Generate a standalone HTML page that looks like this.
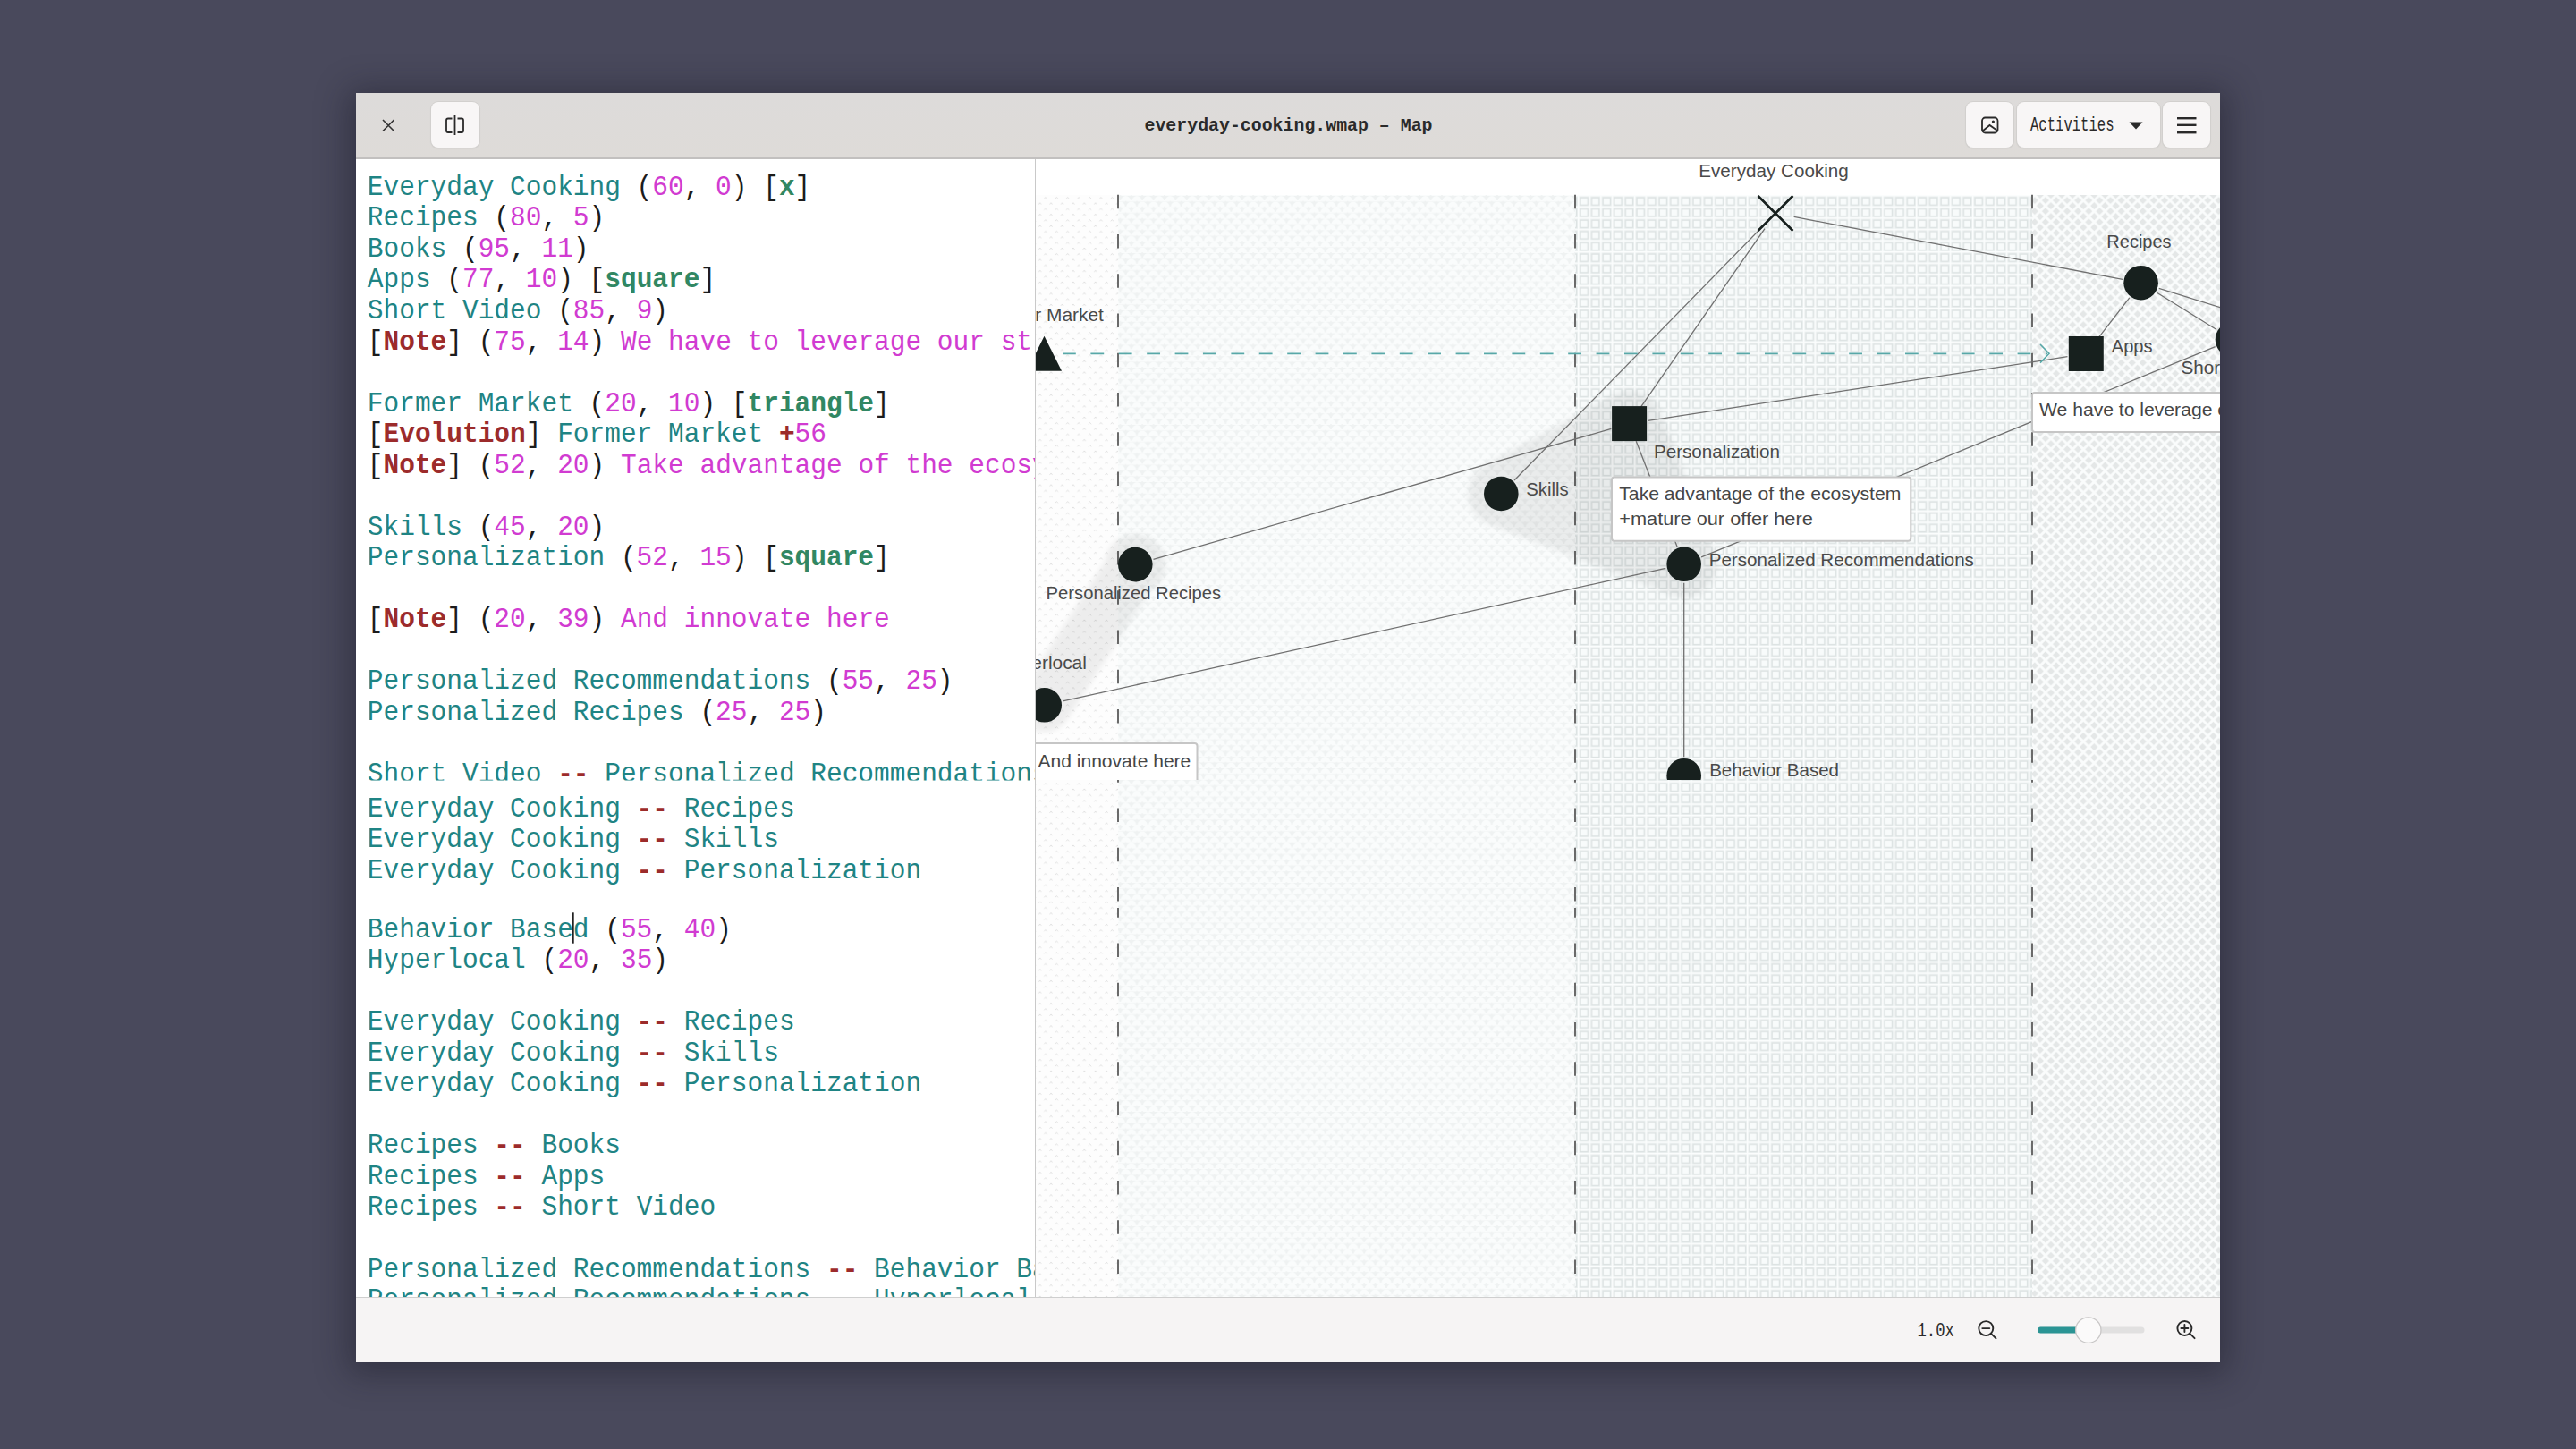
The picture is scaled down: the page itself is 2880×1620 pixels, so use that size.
<!DOCTYPE html>
<html><head><meta charset="utf-8">
<style>
html,body{margin:0;padding:0;}
body{width:2880px;height:1620px;overflow:hidden;position:relative;background:#49495c;font-family:"Liberation Sans",sans-serif;}
.abs{position:absolute;}
#shadow{position:absolute;left:398px;top:104px;width:2084px;height:1419px;box-shadow:0 5px 34px 8px rgba(22,22,34,0.42);}
#hdr{position:absolute;left:398px;top:104px;width:2084px;height:72px;background:linear-gradient(#dddbda,#dedbd8);}
#hdrline{position:absolute;left:398px;top:176px;width:2084px;height:2px;background:#c2c0bf;}
.btn{position:absolute;top:114px;height:51px;background:#f8f6f6;border-radius:8px;box-shadow:0 0 0 1px #d2d0ce, 0 1px 2px rgba(0,0,0,0.10);}
.code text{font-family:"Liberation Mono",monospace;font-size:29.5px;fill:#1c1c1c;stroke:#1c1c1c;stroke-width:0;}
.code .n{fill:#1f8484;stroke:#1f8484}.code .m{fill:#d13bd1;stroke:#d13bd1}.code .k{fill:#9c2b2b;font-weight:bold;stroke-width:0}.code .g{fill:#318763;font-weight:bold;stroke-width:0}
#divider{position:absolute;left:1157px;top:178px;width:1px;height:1272px;background:#c9c9c9;}
#bot{position:absolute;left:398px;top:1451px;width:2084px;height:72px;background:#f6f4f4;}
#botline{position:absolute;left:398px;top:1450px;width:2084px;height:1px;background:#cfcfcf;}
</style></head><body>
<div id="shadow"></div>
<div id="hdr"></div>
<div id="hdrline"></div>
<div class="btn" style="left:482px;width:54px;"></div>
<div class="btn" style="left:2198px;width:53px;"></div>
<div class="btn" style="left:2255px;width:160px;"></div>
<div class="btn" style="left:2418px;width:53px;"></div>
<svg class="abs" style="left:0;top:0" width="2880" height="180" viewBox="0 0 2880 180">
  <path d="M428 134 L440.5 146.5 M440.5 134 L428 146.5" stroke="#333" stroke-width="1.6" fill="none"/>
  <g stroke="#2a2a2a" stroke-width="1.8" fill="none">
    <path d="M505.5 132.5 H501 Q499 132.5 499 134.5 V146 Q499 148 501 148 H505.5"/>
    <path d="M511.5 132.5 H516 Q518 132.5 518 134.5 V146 Q518 148 516 148 H511.5"/>
    <path d="M508.5 129 V151"/>
    <rect x="2216" y="131.5" width="17.5" height="17" rx="3.5"/>
    <path d="M2216.5 146.5 L2224.5 140 L2233 146"/>
  </g>
  <circle cx="2228.4" cy="136" r="1.6" fill="#2a2a2a"/>
  <path d="M2380.5 136.5 H2395.5 L2388 144.5 Z" fill="#2a2a2a"/>
  <g fill="#2a2a2a"><rect x="2434" y="131" width="21.5" height="2.4"/><rect x="2434" y="138.6" width="21.5" height="2.4"/><rect x="2434" y="147" width="21.5" height="2.4"/></g>
  <text x="1279.5" y="146.3" font-family="Liberation Mono" font-weight="bold" font-size="20" fill="#2a2a2a" textLength="322" lengthAdjust="spacingAndGlyphs">everyday-cooking.wmap – Map</text>
  <text x="2270" y="146.3" font-family="Liberation Mono" font-size="21.5" fill="#2a2a2a" textLength="93.5" lengthAdjust="spacingAndGlyphs">Activities</text>
</svg>
<svg class="abs" style="left:398px;top:178px" width="759" height="1272" viewBox="398 178 759 1272">
<defs><clipPath id="ct"><rect x="398" y="178" width="759" height="694.5"/></clipPath>
<clipPath id="ca"><rect x="398" y="872.5" width="759" height="142.5"/></clipPath>
<clipPath id="cb"><rect x="398" y="1015" width="759" height="435.5"/></clipPath></defs>
<rect x="398" y="178" width="759" height="1272" fill="#fff"/>
<g class="code">
<g clip-path="url(#ct)"><text transform="translate(410.8 217.85) scale(1 1.08)" xml:space="preserve"><tspan class="n">Everyday Cooking</tspan> (<tspan class="m">60</tspan>, <tspan class="m">0</tspan>) [<tspan class="g">x</tspan>]</text>
<text transform="translate(410.8 252.38) scale(1 1.08)" xml:space="preserve"><tspan class="n">Recipes</tspan> (<tspan class="m">80</tspan>, <tspan class="m">5</tspan>)</text>
<text transform="translate(410.8 286.91) scale(1 1.08)" xml:space="preserve"><tspan class="n">Books</tspan> (<tspan class="m">95</tspan>, <tspan class="m">11</tspan>)</text>
<text transform="translate(410.8 321.44) scale(1 1.08)" xml:space="preserve"><tspan class="n">Apps</tspan> (<tspan class="m">77</tspan>, <tspan class="m">10</tspan>) [<tspan class="g">square</tspan>]</text>
<text transform="translate(410.8 355.97) scale(1 1.08)" xml:space="preserve"><tspan class="n">Short Video</tspan> (<tspan class="m">85</tspan>, <tspan class="m">9</tspan>)</text>
<text transform="translate(410.8 390.50) scale(1 1.08)" xml:space="preserve">[<tspan class="k">Note</tspan>] (<tspan class="m">75</tspan>, <tspan class="m">14</tspan>) <tspan class="m">We have to leverage our strengths</tspan></text>
<text transform="translate(410.8 459.56) scale(1 1.08)" xml:space="preserve"><tspan class="n">Former Market</tspan> (<tspan class="m">20</tspan>, <tspan class="m">10</tspan>) [<tspan class="g">triangle</tspan>]</text>
<text transform="translate(410.8 494.09) scale(1 1.08)" xml:space="preserve">[<tspan class="k">Evolution</tspan>] <tspan class="n">Former Market</tspan> <tspan class="k">+</tspan><tspan class="m">56</tspan></text>
<text transform="translate(410.8 528.62) scale(1 1.08)" xml:space="preserve">[<tspan class="k">Note</tspan>] (<tspan class="m">52</tspan>, <tspan class="m">20</tspan>) <tspan class="m">Take advantage of the ecosystem +mature our offer here</tspan></text>
<text transform="translate(410.8 597.68) scale(1 1.08)" xml:space="preserve"><tspan class="n">Skills</tspan> (<tspan class="m">45</tspan>, <tspan class="m">20</tspan>)</text>
<text transform="translate(410.8 632.21) scale(1 1.08)" xml:space="preserve"><tspan class="n">Personalization</tspan> (<tspan class="m">52</tspan>, <tspan class="m">15</tspan>) [<tspan class="g">square</tspan>]</text>
<text transform="translate(410.8 701.27) scale(1 1.08)" xml:space="preserve">[<tspan class="k">Note</tspan>] (<tspan class="m">20</tspan>, <tspan class="m">39</tspan>) <tspan class="m">And innovate here</tspan></text>
<text transform="translate(410.8 770.33) scale(1 1.08)" xml:space="preserve"><tspan class="n">Personalized Recommendations</tspan> (<tspan class="m">55</tspan>, <tspan class="m">25</tspan>)</text>
<text transform="translate(410.8 804.86) scale(1 1.08)" xml:space="preserve"><tspan class="n">Personalized Recipes</tspan> (<tspan class="m">25</tspan>, <tspan class="m">25</tspan>)</text>
<text transform="translate(410.8 873.92) scale(1 1.08)" xml:space="preserve"><tspan class="n">Short Video</tspan> <tspan class="k">--</tspan> <tspan class="n">Personalized Recommendations</tspan></text>
</g>
<g clip-path="url(#ca)"><text transform="translate(410.8 912.70) scale(1 1.08)" xml:space="preserve"><tspan class="n">Everyday Cooking</tspan> <tspan class="k">--</tspan> <tspan class="n">Recipes</tspan></text>
<text transform="translate(410.8 947.23) scale(1 1.08)" xml:space="preserve"><tspan class="n">Everyday Cooking</tspan> <tspan class="k">--</tspan> <tspan class="n">Skills</tspan></text>
<text transform="translate(410.8 981.76) scale(1 1.08)" xml:space="preserve"><tspan class="n">Everyday Cooking</tspan> <tspan class="k">--</tspan> <tspan class="n">Personalization</tspan></text>
</g>
<g clip-path="url(#cb)"><text transform="translate(410.8 1047.70) scale(1 1.08)" xml:space="preserve"><tspan class="n">Behavior Based</tspan> (<tspan class="m">55</tspan>, <tspan class="m">40</tspan>)</text>
<text transform="translate(410.8 1082.23) scale(1 1.08)" xml:space="preserve"><tspan class="n">Hyperlocal</tspan> (<tspan class="m">20</tspan>, <tspan class="m">35</tspan>)</text>
<text transform="translate(410.8 1151.29) scale(1 1.08)" xml:space="preserve"><tspan class="n">Everyday Cooking</tspan> <tspan class="k">--</tspan> <tspan class="n">Recipes</tspan></text>
<text transform="translate(410.8 1185.82) scale(1 1.08)" xml:space="preserve"><tspan class="n">Everyday Cooking</tspan> <tspan class="k">--</tspan> <tspan class="n">Skills</tspan></text>
<text transform="translate(410.8 1220.35) scale(1 1.08)" xml:space="preserve"><tspan class="n">Everyday Cooking</tspan> <tspan class="k">--</tspan> <tspan class="n">Personalization</tspan></text>
<text transform="translate(410.8 1289.41) scale(1 1.08)" xml:space="preserve"><tspan class="n">Recipes</tspan> <tspan class="k">--</tspan> <tspan class="n">Books</tspan></text>
<text transform="translate(410.8 1323.94) scale(1 1.08)" xml:space="preserve"><tspan class="n">Recipes</tspan> <tspan class="k">--</tspan> <tspan class="n">Apps</tspan></text>
<text transform="translate(410.8 1358.47) scale(1 1.08)" xml:space="preserve"><tspan class="n">Recipes</tspan> <tspan class="k">--</tspan> <tspan class="n">Short Video</tspan></text>
<text transform="translate(410.8 1427.53) scale(1 1.08)" xml:space="preserve"><tspan class="n">Personalized Recommendations</tspan> <tspan class="k">--</tspan> <tspan class="n">Behavior Based</tspan></text>
<text transform="translate(410.8 1462.06) scale(1 1.08)" xml:space="preserve"><tspan class="n">Personalized Recommendations</tspan> <tspan class="k">--</tspan> <tspan class="n">Hyperlocal</tspan></text>
</g>
<rect x="640.0" y="1020.3" width="1.7" height="34.4" fill="#222"/>
</g></svg>
<svg class="abs" style="left:1158px;top:178px" width="1324" height="1272" viewBox="1158 178 1324 1272">
<defs>
<pattern id="p1" patternUnits="userSpaceOnUse" width="12.4" height="12.6" x="0" y="218">
<rect width="12.4" height="12.6" fill="#fdfdfd"/>
<path d="M1.8 4.2 L3.3 2.4 L4.8 4.2 M8 10.5 L9.5 8.7 L11 10.5" stroke="#dcdcdc" stroke-width="0.9" fill="none"/>
</pattern>
<pattern id="p2" patternUnits="userSpaceOnUse" width="12.4" height="12.8" x="0" y="218">
<rect width="12.4" height="12.8" fill="#eff2f2"/>
<path d="M0.7 6.6 A5.5 5.6 0 0 1 11.7 6.6 Z M-5.5 13 A5.5 5.6 0 0 1 5.5 13 Z M6.9 13 A5.5 5.6 0 0 1 17.9 13 Z" fill="#fafcfc"/>
<path d="M0.7 0.2 L11.7 0.2 M-5.5 6.6 L5.5 6.6 M6.9 6.6 L17.9 6.6" stroke="#fafcfc" stroke-width="1.4"/>
</pattern>
<pattern id="p3" patternUnits="userSpaceOnUse" width="12.6" height="12.6" x="0" y="218">
<rect width="12.6" height="12.6" fill="#edf2f2"/>
<rect x="0" y="0" width="12.6" height="1.4" fill="#fbfdfd"/>
<rect x="0" y="0" width="1.4" height="12.6" fill="#fbfdfd"/>
<rect x="3" y="3" width="8.2" height="8.2" fill="#f8fbfb" stroke="#dce2e2" stroke-width="1.3"/>
</pattern>
<pattern id="p4" patternUnits="userSpaceOnUse" width="12.1" height="12.1" x="0" y="218">
<rect width="12.1" height="12.1" fill="#e4e7e7"/>
<path d="M-1 -1 L13.1 13.1 M13.1 -1 L-1 13.1" stroke="#fafcfc" stroke-width="2.8"/>
</pattern>
<filter id="blur" x="-50%" y="-50%" width="200%" height="200%"><feGaussianBlur stdDeviation="3"/></filter>
<clipPath id="cTop"><rect x="1158" y="178" width="1324" height="694"/></clipPath>
<clipPath id="cA"><rect x="1158" y="872" width="1324" height="143"/></clipPath>
<clipPath id="cB"><rect x="1158" y="1015" width="1324" height="435"/></clipPath>
</defs>
<rect x="1158" y="178" width="1324" height="1272" fill="#ffffff"/>
<g clip-path="url(#cTop)">
<rect x="1158" y="218" width="92" height="654" fill="url(#p1)"/><rect x="1250" y="218" width="511" height="654" fill="url(#p2)"/><rect x="1761" y="218" width="511" height="654" fill="url(#p3)"/><rect x="2272" y="218" width="210" height="654" fill="url(#p4)"/>
<g clip-path="url(#cTop)" stroke="#6a6a6a" stroke-width="2"><path d="M1250 217.8 V872" stroke-dasharray="15.5 28.75"/><path d="M1761 217.8 V872" stroke-dasharray="15.5 28.75"/><path d="M2272 217.8 V872" stroke-dasharray="15.5 28.75"/></g>
<g filter="url(#blur)" opacity="0.06" fill="#000" stroke="#000" stroke-linecap="round" stroke-linejoin="round">
<path d="M1167.7 788.3 L1269.3 631.1" stroke-width="60" fill="none"/>
<circle cx="1269.3" cy="631.1" r="34" stroke="none"/>
<path d="M1678.3 552 L1821.6 473.6 L1882.7 630.8 Z" stroke-width="74"/>
</g>
<g stroke="#707070" stroke-width="1.3">
<line x1="2005.6" y1="242.4" x2="2373.0" y2="312.3"/>
<line x1="1970.3" y1="253.5" x2="1693.0" y2="537.0"/>
<line x1="1973.0" y1="255.7" x2="1833.6" y2="456.4"/>
<line x1="2413.7" y1="322.4" x2="2679.9" y2="405.2"/>
<line x1="2380.8" y1="332.8" x2="2345.1" y2="378.9"/>
<line x1="2411.5" y1="327.3" x2="2478.1" y2="368.5"/>
<line x1="1882.7" y1="651.8" x2="1882.7" y2="846.2"/>
<line x1="1862.2" y1="635.3" x2="1188.2" y2="783.8"/>
<line x1="2476.6" y1="387.6" x2="1902.1" y2="622.8"/>
<line x1="1842.4" y1="470.4" x2="2311.5" y2="398.7"/>
<line x1="1289.5" y1="625.3" x2="1801.4" y2="479.4"/>
<line x1="1829.2" y1="493.2" x2="1875.1" y2="611.2"/>
</g>
<path d="M1186 395.3 H2289" stroke="#58a8a8" stroke-width="1.7" stroke-dasharray="14.8 16.6" stroke-dashoffset="-2"/>
<path d="M2281 385 L2291 395.3 L2281 405.6" stroke="#58a8a8" stroke-width="1.6" fill="none"/>
<g fill="#17201e">
<circle cx="2393.6" cy="316.2" r="19.3"/>
<circle cx="2496" cy="379.6" r="19.3"/>
<circle cx="1678.3" cy="552" r="19.3"/>
<circle cx="1882.7" cy="630.8" r="19.3"/>
<circle cx="1269.3" cy="631.1" r="19.3"/>
<circle cx="1167.7" cy="788.3" r="19.3"/>
<circle cx="1882.7" cy="867.2" r="19.3"/>
<rect x="2312.8" y="376.0" width="39" height="39"/>
<rect x="1802.1" y="454.1" width="39" height="39"/>
<path d="M1167.5 375.8 L1187.0 414.8 L1148.0 414.8 Z"/>
</g>
<path d="M1965.5 219.0 L2004.5 258.0 M2004.5 219.0 L1965.5 258.0" stroke="#17201e" stroke-width="2.7"/>
<g font-family="Liberation Sans" font-size="19.8" fill="#4a4a4a">
<text x="1899.3" y="198" textLength="167.4" lengthAdjust="spacingAndGlyphs">Everyday Cooking</text>
<text x="2355.3" y="276.6" textLength="72.3" lengthAdjust="spacingAndGlyphs">Recipes</text>
<text x="2360.8" y="394.4" textLength="45.8" lengthAdjust="spacingAndGlyphs">Apps</text>
<text x="2438.4" y="417.8" textLength="107.8" lengthAdjust="spacingAndGlyphs">Short Video</text>
<text x="1097.1" y="359" textLength="136.7" lengthAdjust="spacingAndGlyphs">Former Market</text>
<text x="1849.0" y="512.4" textLength="140.9" lengthAdjust="spacingAndGlyphs">Personalization</text>
<text x="1706.3" y="554" textLength="47.5" lengthAdjust="spacingAndGlyphs">Skills</text>
<text x="1910.7" y="633" textLength="296.2" lengthAdjust="spacingAndGlyphs">Personalized Recommendations</text>
<text x="1169.6" y="670.2" textLength="195.5" lengthAdjust="spacingAndGlyphs">Personalized Recipes</text>
<text x="1116.2" y="747.6" textLength="98.7" lengthAdjust="spacingAndGlyphs">Hyperlocal</text>
<text x="1911.2" y="868" textLength="144.8" lengthAdjust="spacingAndGlyphs">Behavior Based</text>
</g>
<g fill="#ffffff" stroke="#c6c6c6" stroke-width="2">
<rect x="2272" y="439" width="330" height="44" rx="3"/>
<rect x="1802" y="533.5" width="334.3" height="71.3" rx="3"/>
<rect x="1100" y="831" width="238.5" height="60" rx="3"/>
</g>
<g font-family="Liberation Sans" font-size="19.8" fill="#464646">
<text x="2280.0" y="465" textLength="322.6" lengthAdjust="spacingAndGlyphs">We have to leverage our strengths</text>
<text x="1810.3" y="559.3" textLength="315.0" lengthAdjust="spacingAndGlyphs">Take advantage of the ecosystem</text>
<text x="1810.3" y="587.4" textLength="216.5" lengthAdjust="spacingAndGlyphs">+mature our offer here</text>
<text x="1160.5" y="858" textLength="170.8" lengthAdjust="spacingAndGlyphs">And innovate here</text>
</g>
</g>
<g clip-path="url(#cA)"><rect x="1158" y="872" width="92" height="143" fill="url(#p1)"/><rect x="1250" y="872" width="511" height="143" fill="url(#p2)"/><rect x="1761" y="872" width="511" height="143" fill="url(#p3)"/><rect x="2272" y="872" width="210" height="143" fill="url(#p4)"/><g clip-path="url(#cA)" stroke="#6a6a6a" stroke-width="2"><path d="M1250 726.5 V1015" stroke-dasharray="15.5 28.75"/><path d="M1761 726.5 V1015" stroke-dasharray="15.5 28.75"/><path d="M2272 726.5 V1015" stroke-dasharray="15.5 28.75"/></g></g>
<g clip-path="url(#cB)"><rect x="1158" y="1015" width="92" height="435" fill="url(#p1)"/><rect x="1250" y="1015" width="511" height="435" fill="url(#p2)"/><rect x="1761" y="1015" width="511" height="435" fill="url(#p3)"/><rect x="2272" y="1015" width="210" height="435" fill="url(#p4)"/><g clip-path="url(#cB)" stroke="#6a6a6a" stroke-width="2"><path d="M1250 877.5999999999999 V1450" stroke-dasharray="15.5 28.75"/><path d="M1761 877.5999999999999 V1450" stroke-dasharray="15.5 28.75"/><path d="M2272 877.5999999999999 V1450" stroke-dasharray="15.5 28.75"/></g></g>
</svg>
<div id="divider"></div>
<div id="botline"></div>
<div id="bot"></div>
<svg class="abs" style="left:0;top:1450px" width="2880" height="73" viewBox="0 1450 2880 73">
  <text x="2143.5" y="1494.4" font-family="Liberation Mono" font-size="21.5" fill="#2a2a2a" textLength="41.5" lengthAdjust="spacingAndGlyphs">1.0x</text>
  <g stroke="#2a2a2a" stroke-width="1.9" fill="none" stroke-linecap="round">
    <circle cx="2220.3" cy="1485.1" r="8"/><path d="M2226 1490.8 L2231.5 1496.3"/><path d="M2216.3 1485.1 H2224.3"/>
    <circle cx="2442.4" cy="1485" r="8"/><path d="M2448.1 1490.7 L2453.6 1496.2"/><path d="M2438.4 1485 H2446.4 M2442.4 1481 V1489"/>
  </g>
  <rect x="2278" y="1483.6" width="119.5" height="7" rx="3.5" fill="#e1e0e0"/>
  <rect x="2278" y="1483.6" width="60" height="7" rx="3.5" fill="#2b9494"/>
  <circle cx="2334.8" cy="1487.1" r="14.2" fill="#fbfafa" stroke="#c9c7c7" stroke-width="1.3"/>
</svg>
</body></html>
